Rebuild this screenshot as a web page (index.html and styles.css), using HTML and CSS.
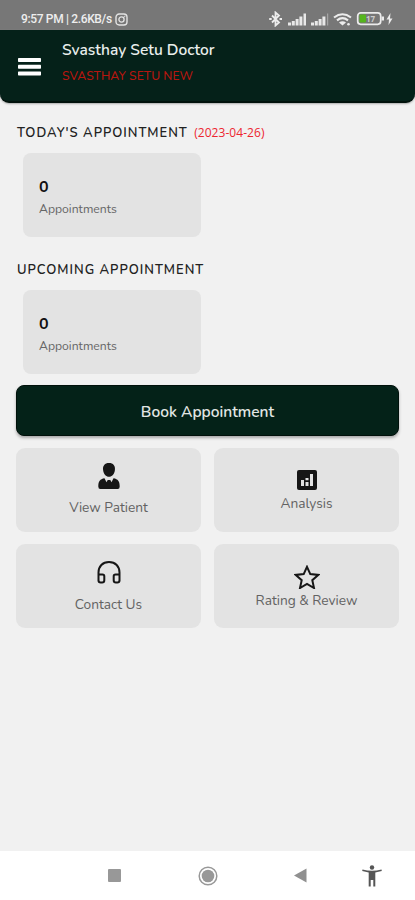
FILE: index.html
```html
<!DOCTYPE html>
<html lang="en">
<head>
<meta charset="utf-8">
<title>Svasthay Setu Doctor</title>
<link rel="stylesheet" href="styles.css">
</head>
<body>
<div class="status">
  <span class="clock">9:57 PM | 2.6KB/s</span>
  <svg class="insta" width="13" height="13" viewBox="0 0 13 13" fill="none" stroke="#e4e4e4"><rect x="1" y="1" width="11" height="11" rx="3.2" stroke-width="1.4"/><circle cx="6.5" cy="6.5" r="2.6" stroke-width="1.3"/><circle cx="9.6" cy="3.5" r=".4"/></svg>
  <svg class="signals" width="128" height="16" viewBox="0 0 128 16">
    <path d="M3 4.500l7 7-3.500 3v-13l3.500 3-7 7" fill="none" stroke="#ececec" stroke-width="1.800"/>
    <path d="M.2 8h2.500M10.500 8h2.500" stroke="#ececec" stroke-width="2"/>
    <g fill="#e8e8e8"><path d="M19 11.500h3v3h-3zM22.800 10h3v4.500h-3zM26.600 8h3v6.500h-3zM30.400 5.500h3v9h-3zM34.500 2.500H37v12h-2.500z"/><path d="M42 11.500h3v3h-3zM45.800 10h3v4.500h-3zM49.600 8h3v6.500h-3zM53.400 5.500h3v9h-3z"/></g>
    <path d="M58 2.500h1.200v12H58z" fill="#a5a5a5"/>
    <g fill="none" stroke="#ececec" stroke-width="2.100"><path d="M65 6.500q8.500-6.500 17 0M68 9.300q5.500-4.300 11 0"/></g><path d="M70 11.500q3.500-2.500 7 0l-3.500 3z" fill="#ececec"/><circle cx="79.500" cy="13.200" r="1.300" fill="#ececec"/>
    <rect x="88.700" y="1.900" width="23" height="11.400" rx="3" fill="#777" stroke="#ececec" stroke-width="1.700"/><rect x="90.500" y="3.600" width="6.500" height="8" rx="1" fill="#55b51d"/><path d="M112.500 5.500h2.500v4h-2.500z" fill="#ececec"/>
    <text x="97" y="10.600" class="charge">17</text>
    <path d="M121.500 2l-4 6.500h2.500l-.5 5.500 4-6.500H121z" fill="#ececec"/>
  </svg>
</div>
<header class="bar">
  <svg class="menu" width="23" height="18" viewBox="0 0 23 18" fill="#fff"><rect width="23" height="4" rx=".7"/><rect y="6.700" width="23" height="4" rx=".7"/><rect y="13.400" width="23" height="4" rx=".7"/></svg>
  <div>
    <h1 class="title">Svasthay Setu Doctor</h1>
    <p class="clinic">SVASTHAY SETU NEW</p>
  </div>
</header>
<main class="content">
  <h2 class="heading today">TODAY'S APPOINTMENT <span class="date">(2023-04-26)</span></h2>
  <section class="count"><strong>0</strong><span>Appointments</span></section>
  <h2 class="heading upcoming">UPCOMING APPOINTMENT</h2>
  <section class="count"><strong>0</strong><span>Appointments</span></section>
  <button class="book">Book Appointment</button>
  <div class="tiles">
    <div class="tile">
      <svg width="24" height="28" viewBox="0 0 24 28" fill="#161616"><path d="M12 1c4.300 0 6.400 2.700 5.900 7-.4 4-3 6.800-5.900 6.800S6.500 12 6.100 8C5.600 3.700 7.700 1 12 1z"/><path d="M7.500 16.300l2 4 1.200-2.300h2.600l1.200 2.300 2-4c4.500.8 6.200 3 6.200 8.200q0 2.500-2 2.500H3.300q-2 0-2-2.500c0-5.200 1.700-7.400 6.200-8.200z"/></svg>
      <span>View Patient</span>
    </div>
    <div class="tile short">
      <svg width="20" height="20" viewBox="0 0 20 20"><rect width="20" height="20" rx="2" fill="#161616"/><path d="M4 10h3v6H4zM8.500 12h3v4h-3zM8.500 8h3v2.200h-3zM13 4h3v12h-3z" fill="#e3e3e3"/></svg>
      <span>Analysis</span>
    </div>
    <div class="tile contact">
      <svg width="24" height="28" viewBox="0 0 24 28" fill="none" stroke="#161616" stroke-width="2"><path d="M1.500 22v-8.500C1.500 7.500 5.500 3 12 3s10.500 4.500 10.500 10.500V22M1.500 15.500h4q1.800 0 1.800 1.800v4q0 2.200-2.200 2.200H3.700q-2.200 0-2.200-2.200zM22.500 15.500h-4q-1.800 0-1.800 1.800v4q0 2.200 2.200 2.200h1.400q2.200 0 2.200-2.200z"/></svg>
      <span>Contact Us</span>
    </div>
    <div class="tile short rating">
      <svg width="26" height="24" viewBox="0 0 26 24" fill="none" stroke="#161616" stroke-width="2"><path d="M13 1.800l3.300 7.300 7.900.8-5.900 5.300 1.700 7.800-7-4.100L6 23l1.700-7.800-5.900-5.300 7.900-.8z"/></svg>
      <span>Rating &amp; Review</span>
    </div>
  </div>
</main>
<nav class="nav">
  <svg width="13" height="13" viewBox="0 0 13 13"><rect width="13" height="13" rx="1" fill="#989898"/></svg>
  <svg class="home" width="20" height="20" viewBox="0 0 20 20"><circle cx="10" cy="10" r="8.800" fill="none" stroke="#989898" stroke-width="1.500"/><circle cx="10" cy="10" r="6.300" fill="#989898"/></svg>
  <svg class="back" width="13" height="15" viewBox="0 0 13 15"><path d="M0 7.500L12.500.5v14z" fill="#909090"/></svg>
  <svg class="access" width="20" height="22" viewBox="0 0 20 22" fill="#555"><circle cx="10" cy="2.500" r="2.200"/><path d="M.5 4.500q9.500 2.500 19 0l.3 1.600-6.500 1.400V21.500h-2V15H8.700v6.500h-2V7.500L.2 6.100z"/></svg>
</nav>
</body>
</html>
```
FILE: styles.css
```css
* { box-sizing: border-box; }
body {
  margin: 0;
  height: 900px;
  display: flex;
  flex-direction: column;
  overflow: hidden;
  background: #f1f1f1;
  font-family: Nunito, "Open Sans", sans-serif;
}
h1, h2, p { margin: 0; font-weight: 400; }
svg { display: block; flex: none; }
.status {
  height: 30px;
  padding: 8px 18px 0 21px;
  display: flex;
  align-items: center;
  background: #777;
  color: #eee;
}
.clock { width: 94px; font: 500 12px/16px Roboto, sans-serif; letter-spacing: -.35px; white-space: nowrap; }
.signals { margin-left: auto; }
.charge { font: 700 8px "Open Sans", sans-serif; fill: #ccc; }
.bar {
  height: 73px;
  padding: 9px 18px 0;
  display: flex;
  gap: 21px;
  background: #052119;
  border-radius: 0 0 9px 9px;
  border-bottom: 2px solid #01120c;
  box-shadow: 0 1px 2px #aaa;
}
.menu { margin-top: 19px; }
.title { font-size: 15.5px; line-height: 22px; font-weight: 600; color: #e9eeec; white-space: nowrap; }
.clinic { margin-top: 6px; font-size: 12.2px; line-height: 18px; font-weight: 500; color: #b7160f; letter-spacing: .04px; }
.content { flex: 1; padding: 21px 16px 0; }
.heading { padding-left: 1px; font-size: 13px; line-height: 18px; font-weight: 600; color: #222; letter-spacing: .99px; white-space: nowrap; }
.date { margin-left: 2px; font: 400 12px/18px "Open Sans", sans-serif; color: #ed2630; letter-spacing: .05px; }
.upcoming { margin-top: 24px; }
.count {
  width: 178px;
  height: 84px;
  margin: 11px 0 0 7px;
  padding: 24px 16px 0;
  display: flex;
  flex-direction: column;
  background: #e3e3e3;
  border-radius: 8px;
}
.count strong { font-size: 16px; line-height: 20px; font-weight: 700; color: #111; }
.count span { margin-top: 3px; font-size: 12.2px; line-height: 18px; color: #666; }
.book {
  display: block;
  width: 383px;
  height: 51px;
  margin: 11px 0 12px;
  padding: 2px 0 0;
  border: 1px solid #01110b;
  border-radius: 8px;
  background: #042218;
  box-shadow: 0 2px 3px #aaa;
  color: #e2e6e4;
  font: 600 15.5px/24px Nunito, "Open Sans", sans-serif;
}
.tiles { display: grid; grid-template-columns: 185px 185px; gap: 12px 13px; }
.tile {
  height: 84px;
  padding-top: 14px;
  display: flex;
  flex-direction: column;
  align-items: center;
  background: #e3e3e3;
  border-radius: 9px;
  color: #626262;
  font-size: 13.7px;
  line-height: 20px;
}
.tile span { margin-top: 8px; white-space: nowrap; }
.contact { padding-top: 15px; }
.short { padding-top: 22px; }
.short span { margin-top: 4px; }
.rating { padding-top: 21px; }
.rating span { margin-top: 2px; }
.nav {
  height: 49px;
  padding-left: 108px;
  display: flex;
  align-items: center;
  background: #fff;
}
.home { margin-left: 77px; }
.back { margin-left: 76px; }
.access { margin-left: 55px; }
```
